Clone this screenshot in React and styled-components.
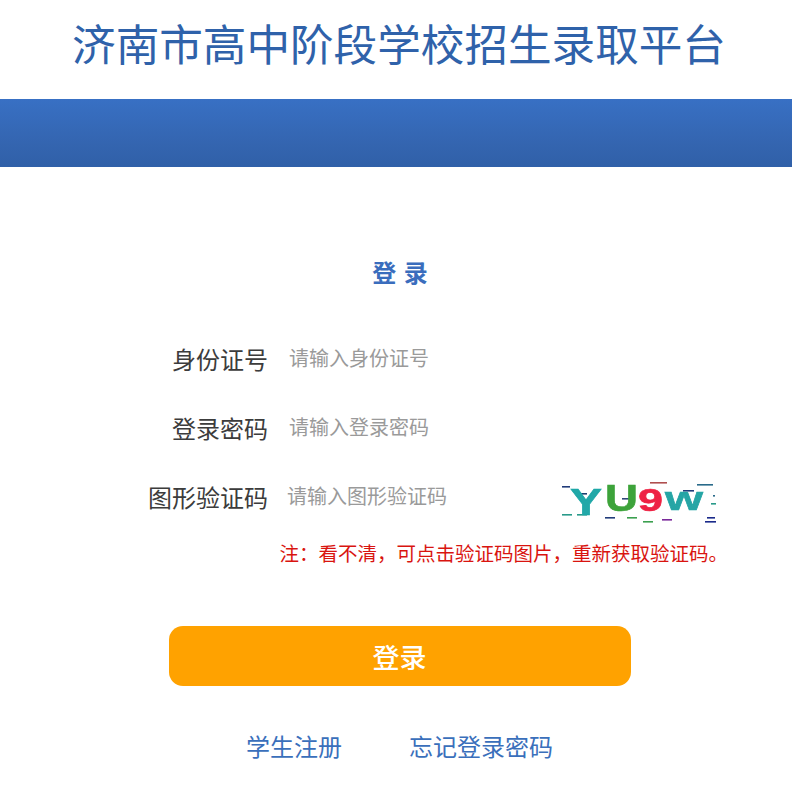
import React from 'react'
import styled, { createGlobalStyle } from 'styled-components'

const GlobalStyle = createGlobalStyle`
  html, body {
    margin: 0;
    padding: 0;
    background: #fff;
    font-family: "Noto Sans CJK SC", "Noto Sans", sans-serif;
  }
  input::placeholder {
    color: #9a9a9a;
    opacity: 1;
  }
`

const Page = styled.div`
  width: 792px;
  height: 794px;
  overflow: hidden;
`

const Title = styled.h1`
  margin: 0;
  height: 99px;
  padding-left: 6px;
  box-sizing: border-box;
  font-size: 43.6px;
  line-height: 85px;
  font-weight: 400;
  text-align: center;
  white-space: nowrap;
  color: #2f62aa;
`

const Banner = styled.div`
  height: 68px;
  background: linear-gradient(#3870c4, #3465b0 65%, #3060a8);
`

const Heading = styled.h2`
  margin: 89px 0 0;
  padding-left: 9px;
  height: 32px;
  font-size: 24px;
  line-height: 32px;
  font-weight: 700;
  letter-spacing: 1px;
  text-align: center;
  color: #3a6dbd;
`

const Form = styled.form`
  display: flex;
  flex-direction: column;
  margin-top: 47px;
`

const Row = styled.div`
  display: flex;
  align-items: center;
  height: 48px;
  margin-bottom: 21px;
`

const Label = styled.label`
  width: 268px;
  flex: none;
  font-size: 24px;
  line-height: 48px;
  text-align: right;
  color: #3c3c3c;
`

const Field = styled.input`
  width: ${props => props.$width};
  margin-left: ${props => props.$left};
  margin-top: -2px;
  padding: 0;
  border: 0;
  outline: 0;
  background: none;
  font-family: inherit;
  font-size: 20px;
  line-height: 28px;
  color: #333;
`

const Captcha = styled.svg`
  flex: none;
  width: 156px;
  height: 46px;
  margin-left: 93px;
  margin-top: 8px;
  overflow: visible;
`

const Note = styled.p`
  margin: -3px 64px 0 0;
  font-size: 19.5px;
  line-height: 28px;
  text-align: right;
  white-space: nowrap;
  color: #d9140f;
`

const SubmitButton = styled.button`
  align-self: center;
  width: 462px;
  height: 60px;
  margin: 59px 0 0 7px;
  border: 0;
  border-radius: 14px;
  background: #ffa200;
  font-family: inherit;
  font-size: 27px;
  font-weight: 500;
  color: #fff;
`

const Links = styled.div`
  display: flex;
  justify-content: center;
  gap: 67px;
  margin: 40px 0 0 7px;
`

const LinkItem = styled.a`
  font-size: 24px;
  line-height: 40px;
  color: #3a6fbb;
`

// verification image: blurred letters with stray dashes
const dashes = [
  [2, 8, 8, '#223a7a'], [17, 15, 10, '#1f3f6f'], [2, 36, 10, '#2a9a8a'], [17, 36, 10, '#2a9a8a'],
  [45, 39, 10, '#223a7a'], [67, 39, 10, '#3aa050'], [83, 43, 10, '#3aa050'], [102, 41, 10, '#7a2a9a'],
  [145, 43, 11, '#1a2a8a'], [147, 39, 8, '#1a2a8a'], [90, 4, 17, '#b05050'], [123, 12, 11, '#223a7a'],
  [137, 6, 16, '#2a6a8a'], [62, 20, 10, '#334a7a'], [151, 25, 5, '#2a9a8a'], [153, 17, 2, '#2a6a8a'],
]

const letters = [
  { ch: 'Y', x: 10, y: 37, size: 36, width: 32, fill: '#20a8a8' },
  { ch: 'U', x: 45, y: 33, size: 36, width: 33, fill: '#3da33a' },
  { ch: '9', x: 78, y: 33, size: 31, width: 25, fill: '#ee2244' },
  { ch: 'w', x: 105, y: 32, size: 34, width: 38, fill: '#25a5a5' },
]

function CaptchaImage() {
  return (
    <Captcha viewBox="0 0 156 46" aria-label="验证码">
      <defs>
        <filter id="soft"><feGaussianBlur stdDeviation="0.7" /></filter>
      </defs>
      <g filter="url(#soft)" fontFamily="'Liberation Sans', sans-serif" fontWeight="700">
        {dashes.map(([x, y, w, c], i) => (
          <rect key={i} x={x} y={y} width={w} height="1.6" fill={c} />
        ))}
        {letters.map(l => (
          <text key={l.ch} x={l.x} y={l.y} fontSize={l.size} fill={l.fill} stroke={l.fill} strokeWidth="0.6" textLength={l.width} lengthAdjust="spacingAndGlyphs">
            {l.ch}
          </text>
        ))}
      </g>
    </Captcha>
  )
}

export default function App() {
  return (
    <Page>
      <GlobalStyle />
      <Title>济南市高中阶段学校招生录取平台</Title>
      <Banner />
      <Heading>登 录</Heading>
      <Form onSubmit={e => e.preventDefault()}>
        <Row>
          <Label>身份证号</Label>
          <Field $left="21px" $width="300px" placeholder="请输入身份证号" />
        </Row>
        <Row>
          <Label>登录密码</Label>
          <Field $left="21px" $width="300px" type="password" placeholder="请输入登录密码" />
        </Row>
        <Row>
          <Label>图形验证码</Label>
          <Field $left="19px" $width="180px" placeholder="请输入图形验证码" />
          <CaptchaImage />
        </Row>
        <Note>注：看不清，可点击验证码图片，重新获取验证码。</Note>
        <SubmitButton type="submit">登录</SubmitButton>
      </Form>
      <Links>
        <LinkItem>学生注册</LinkItem>
        <LinkItem>忘记登录密码</LinkItem>
      </Links>
    </Page>
  )
}
